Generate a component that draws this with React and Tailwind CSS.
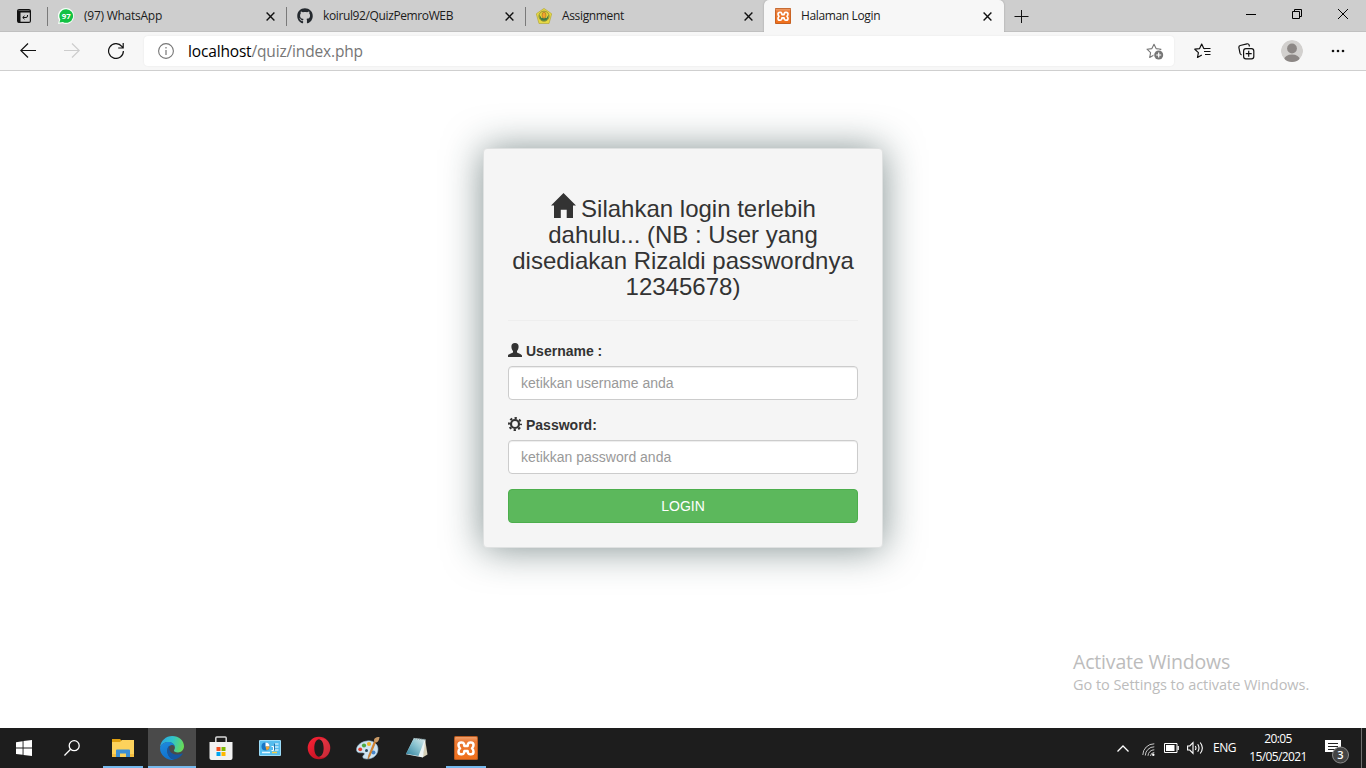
import React from "react";
import { FaGithub } from "react-icons/fa";

const UI = "font-['Open_Sans','Noto_Sans',sans-serif]";

function XamppIcon({ className }) {
  return (
    <svg viewBox="0 0 24 24" className={className}>
      <defs>
        <linearGradient id="xampp-face" x1="0" y1="0" x2="0" y2="1">
          <stop offset="0" stopColor="#f0a06c" />
          <stop offset=".2" stopColor="#ea7a35" />
          <stop offset="1" stopColor="#f0701c" />
        </linearGradient>
      </defs>
      <rect width="24" height="24" rx="1.5" fill="#b85a20" />
      <rect x="1" y="1" width="22" height="22" rx="1" fill="url(#xampp-face)" />
      <path
        d="M10.400 9.900 L10 7.900 Q9.500 6.500 7.900 6.500 H7.100 Q4.500 6.500 4.500 9.100 Q4.500 11.100 6 12.400 Q4.500 13.700 4.500 15.700 Q4.500 18.300 7.100 18.300 H7.900 Q9.500 18.300 10 16.900 L10.400 14.900 H13.600 L14 16.900 Q14.500 18.300 16.100 18.300 H16.900 Q19.500 18.300 19.500 15.700 Q19.500 13.700 18 12.400 Q19.500 11.100 19.500 9.100 Q19.500 6.500 16.900 6.500 H16.100 Q14.500 6.500 14 7.900 L13.600 9.900 Z"
        fill="none"
        stroke="#fff"
        strokeWidth="2.500"
        strokeLinejoin="round"
      />
    </svg>
  );
}

function WhatsAppIcon() {
  return (
    <svg viewBox="0 0 16 16" className="size-4">
      <path d="M8 0a8 8 0 0 1 0 16 8 8 0 0 1-3.600-.8L0 16l1-4A8 8 0 0 1 8 0Z" fill="#f6fff8" />
      <path d="M8.200 1.200a6.800 6.800 0 1 1-3.300 12.700L1.500 14.600l.8-3.200A6.800 6.800 0 0 1 8.200 1.200Z" fill="#12c143" />
      <text x="8.200" y="10.700" textAnchor="middle" fontSize="7.800" fontWeight="700" fill="#fff" fontFamily="Open Sans, sans-serif">97</text>
    </svg>
  );
}

function CampusIcon() {
  return (
    <svg viewBox="0 0 16 16" className="size-4">
      <path d="M8 .4 15.700 5.800 13 15.500H3L.3 5.800Z" fill="#e6da45" stroke="#b5a83b" strokeWidth=".7" strokeLinejoin="round" />
      <circle cx="8" cy="8.200" r="5.100" fill="#e9d537" stroke="#8f8b35" strokeWidth=".9" />
      <path d="M3.500 6.800c-.3 4 1.700 6 4.500 6s4.800-2 4.500-6L10.500 10H5.500Z" fill="#3f7c45" />
      <ellipse cx="8" cy="7.200" rx="2" ry="3.100" fill="#f0a42f" stroke="#7d6526" strokeWidth=".5" />
    </svg>
  );
}

function CloseX() {
  return (
    <svg viewBox="0 0 9 9" className="size-[9px]" fill="none" stroke="#111" strokeWidth="1.400">
      <path d="M.6.6l7.800 7.800M8.400.6.6 8.400" />
    </svg>
  );
}

function Tab({ icon, title, tracking }) {
  return (
    <div className="flex h-8 w-[239px] items-center">
      <span className="h-[19px] w-px bg-[#7a7a7a]" />
      <span className="ml-[10px] flex size-4">{icon}</span>
      <span className={"ml-[10px] flex-1 whitespace-nowrap text-[12px] leading-4 text-[#1b1b1b] " + tracking}>{title}</span>
      <span className="mr-[11px]">
        <CloseX />
      </span>
    </div>
  );
}

function TitleBar() {
  return (
    <div className="flex h-8 bg-[#cecece] shadow-[inset_0_-1px_0_#c0c0c0]">
      <div className="flex w-[47px] items-center justify-center">
        <svg viewBox="0 0 14 14" className="size-[14px]" fill="none" stroke="#111">
          <rect x=".6" y=".6" width="12.800" height="12.800" rx="1.500" strokeWidth="1.200" />
          <path d="M.6 1.500h12.800v2H3.500v10H1Z" fill="#111" stroke="none" />
          <path d="M10.500 6v1q0 1.500-1.500 1.500H6M7.500 6.800 5.700 8.500l1.800 1.700" strokeWidth="1" />
        </svg>
      </div>
      <Tab icon={<WhatsAppIcon />} title="(97) WhatsApp" tracking="tracking-[-0.25px]" />
      <Tab icon={<FaGithub className="size-4 text-[#24292e]" />} title="koirul92/QuizPemroWEB" tracking="tracking-[-0.38px]" />
      <Tab icon={<CampusIcon />} title="Assignment" tracking="tracking-[-0.35px]" />
      <div className="flex w-[240px] items-center rounded-t-[5px] bg-[#f7f7f7] shadow-[0_0_2px_rgba(0,0,0,0.25)]">
        <span className="ml-[11px] flex size-4">
          <XamppIcon className="size-4" />
        </span>
        <span className="ml-[10px] flex-1 whitespace-nowrap text-[12px] leading-4 tracking-[-0.36px] text-[#1b1b1b]">Halaman Login</span>
        <span className="mr-[12px]">
          <CloseX />
        </span>
      </div>
      <div className="flex w-[35px] items-center justify-center">
        <svg viewBox="0 0 15 15" className="size-[15px]" stroke="#111" strokeWidth="1">
          <path d="M7.500 1v13M.5 7.500h14" />
        </svg>
      </div>
      <div className="ml-auto flex h-7 items-center">
        <span className="flex w-[46px] justify-center">
          <svg viewBox="0 0 10 10" className="size-[10px]" stroke="#000"><path d="M0 5.500h10" /></svg>
        </span>
        <span className="flex w-[46px] justify-center">
          <svg viewBox="0 0 10 10" className="size-[10px]" fill="none" stroke="#000">
            <path d="M.5 2.500h7v7h-7ZM2.500 2.500v-2h7v7h-2" />
          </svg>
        </span>
        <span className="flex w-[46px] justify-center">
          <svg viewBox="0 0 10 10" className="size-[10px]" fill="none" stroke="#000"><path d="M0 0l10 10M10 0 0 10" /></svg>
        </span>
      </div>
    </div>
  );
}

const STAR = "M8 1.200l2.100 4.400 4.900.6-3.600 3.400.9 4.900L8 12.100l-4.300 2.400.9-4.900L1 6.200l4.900-.6Z";

function Toolbar() {
  return (
    <div className="flex h-[39px] items-center border-b border-[#cfcfcf] bg-[#f7f7f7]">
      <div className="flex w-[144px] pl-[6px]">
        <span className="flex w-11 justify-center">
          <svg viewBox="0 0 16 16" className="size-4" fill="none" stroke="#111" strokeWidth="1.200"><path d="M16 7.500H.8M8 .5l-7.200 7 7.200 7" /></svg>
        </span>
        <span className="flex w-11 justify-center">
          <svg viewBox="0 0 16 16" className="size-4" fill="none" stroke="#cdcdcd" strokeWidth="1.200"><path d="M0 7.500h15.200M8 .5l7.200 7-7.200 7" /></svg>
        </span>
        <span className="flex w-11 justify-center">
          <svg viewBox="0 0 16 16" className="size-4" fill="none" stroke="#111" strokeWidth="1.200">
            <path d="M15.400 8A7.400 7.400 0 1 1 13.800 3.400L15 5M15.200 0v5h-5" />
          </svg>
        </span>
      </div>
      <div className="flex h-[30px] w-[1030px] items-center rounded bg-white pl-[14px] pr-[10px] shadow-[0_0_2px_rgba(0,0,0,0.08)]">
        <svg viewBox="0 0 16 16" className="size-4" fill="none" stroke="#767676">
          <circle cx="8" cy="8" r="7.400" strokeWidth="1.100" />
          <path d="M8 7v5M8 4v1.500" strokeWidth="1.200" />
        </svg>
        <span className="ml-[14px] flex-1 text-[15.500px] leading-5 tracking-[-0.16px] text-[#767676]">
          <span className="text-black">localhost</span>/quiz/index.php
        </span>
        <svg viewBox="0 0 18 17" className="h-[17px] w-[18px]" fill="none">
          <path d={STAR} stroke="#767676" strokeWidth="1.100" strokeLinejoin="round" />
          <circle cx="12.700" cy="12" r="5.300" fill="#fff" />
          <circle cx="12.700" cy="12" r="4.500" fill="#767676" />
          <path d="M12.700 9.500v5M10.200 12h5" stroke="#fff" strokeWidth="1.200" />
        </svg>
      </div>
      <div className="flex flex-1 items-center pl-[20px]">
        <svg viewBox="0 0 17 16" className="h-4 w-[17px]" fill="none" stroke="#111" strokeWidth="1.200" strokeLinejoin="round">
          <path d="M11.300 5.700 9.800 5.400 7.700 1 5.600 5.600.8 6.200l3.600 3.400-.9 4.900 4.300-2.400" />
          <path d="M10.500 5.500h6M10 8.500h6.500M11 11.500h5.500" strokeWidth="1.100" />
        </svg>
        <svg viewBox="0 0 17 17" className="ml-[27px] size-[17px]" fill="none" stroke="#111" strokeWidth="1.200">
          <path d="M3.600 11.800Q2.300 11.500 2 10.200L.9 4.700Q.6 3 2.200 2.500L9 .8q1.700-.3 2.100 1.200l.4 1.500" />
          <rect x="5.600" y="5.600" width="10.200" height="10.200" rx="2.300" />
          <path d="M10.700 7.700v6M7.700 10.700h6" />
        </svg>
        <svg viewBox="0 0 22 22" className="ml-[26px] size-[22px]">
          <defs><clipPath id="avatar-clip"><circle cx="11" cy="11" r="11" /></clipPath></defs>
          <g clipPath="url(#avatar-clip)">
            <circle cx="11" cy="11" r="11" fill="#d2d0ce" />
            <circle cx="11" cy="8.500" r="4.900" fill="#8c8785" />
            <ellipse cx="11" cy="19.500" rx="7.800" ry="5" fill="#8c8785" />
          </g>
        </svg>
        <svg viewBox="0 0 14 4" className="ml-[28px] h-1 w-[14px]" fill="#111">
          <circle cx="2" cy="2" r="1.300" /><circle cx="7" cy="2" r="1.300" /><circle cx="12" cy="2" r="1.300" />
        </svg>
      </div>
    </div>
  );
}

function LoginCard() {
  return (
    <form className="flex h-[400px] w-[400px] flex-col rounded border border-[#dfe1e1] bg-[#f5f5f5] px-[24px] pt-[47px] font-['Liberation_Sans',Arial,sans-serif] text-sm leading-5 text-[#333] shadow-[0_1px_38px_rgba(28,55,55,0.56)]">
      <h3 className="h-[104px] whitespace-nowrap text-center text-[24px] leading-[26px]">
        <svg viewBox="0 0 25 25" className="relative -top-[2px] mr-[5px] ml-px inline-block size-[25px] align-baseline -mb-[3px] -mt-[8px]" fill="#333">
          <path d="M12.500 0 25 12.500h-3V25h-6.300v-8.300H9.800V25H3V12.500H0Z" />
        </svg>
        Silahkan login terlebih
        <br />
        dahulu... (NB : User yang
        <br />
        disediakan Rizaldi passwordnya
        <br />
        12345678)
      </h3>
      <hr className="mt-5 mb-5 border-t border-[#eee]" />
      <label className="flex h-5 items-center font-bold">
        <svg viewBox="0 0 14 14" className="mr-1 size-[14px] -mt-[2px]" fill="#333">
          <path d="M7 0C9.500 0 10.600 1.500 10.600 3.500 10.600 5.500 9.800 7 9 8v1.400c1 .8 5 1.600 5 3.200V14H0v-1.400c0-1.600 4-2.400 5-3.200V8C4.200 7 3.400 5.500 3.400 3.500 3.400 1.500 4.500 0 7 0Z" />
        </svg>
        Username :
      </label>
      <input className="mt-[5px] h-[34px] rounded border border-[#ccc] bg-white px-3 shadow-[inset_0_1px_1px_rgba(0,0,0,0.075)] placeholder:text-[#999]" placeholder="ketikkan username anda" />
      <label className="mt-[15px] flex h-5 items-center font-bold">
        <svg viewBox="0 0 14 14" className="mr-1 size-[14px] -mt-[2px]" fill="none" stroke="#333">
          <circle cx="7" cy="7" r="4" strokeWidth="2.200" />
          <circle cx="7" cy="7" r="6" strokeWidth="2" strokeDasharray="2.350 2.362" strokeDashoffset="1.175" />
        </svg>
        Password:
      </label>
      <input type="password" className="mt-[5px] h-[34px] rounded border border-[#ccc] bg-white px-3 shadow-[inset_0_1px_1px_rgba(0,0,0,0.075)] placeholder:text-[#999]" placeholder="ketikkan password anda" />
      <button type="button" className="mt-[15px] h-[34px] rounded border border-[#4cae4c] bg-[#5cb85c] text-white">LOGIN</button>
    </form>
  );
}

function ExplorerIcon() {
  return (
    <svg viewBox="0 0 22 18" className="-mt-[1px] h-[18px] w-[22px]">
      <path d="M0 0h8l2 2h12v16H0Z" fill="#e0a010" />
      <path d="M0 3h8l2-2h12v17H0Z" fill="#fdd25c" />
      <path d="M4 18v-6.500Q4 10.500 5 10.500h12q1 0 1 1V18h-4v-3.500H8V18Z" fill="#3d8fd4" />
      <path d="M0 15h4v3H0ZM18 15h4v3h-4Z" fill="#f4bd3f" />
    </svg>
  );
}

function EdgeIcon() {
  return (
    <svg viewBox="0 0 24 24" className="size-6">
      <defs>
        <linearGradient id="edge-top" x1="0" y1=".3" x2="1" y2=".5">
          <stop offset="0" stopColor="#2aa6e4" />
          <stop offset=".5" stopColor="#31c4c9" />
          <stop offset="1" stopColor="#69dc55" />
        </linearGradient>
        <linearGradient id="edge-left" x1="0" y1="0" x2=".4" y2="1">
          <stop offset="0" stopColor="#1f8bdc" />
          <stop offset="1" stopColor="#0f72cf" />
        </linearGradient>
      </defs>
      <path d="M0 11.500C.6 4.500 6 0 12.200 0 19 0 24 4.700 24 10.200c0 3.700-2.800 6.200-6 6.200-3 0-4.100-1.100-4.100-1.900 0-.7 1-1.100 1-3C14.900 8.500 12 6 8.500 6 4 6 1 8.800 0 11.500Z" fill="url(#edge-top)" />
      <path d="M0 12C.7 8.500 4 6 8.400 6c3.300 0 6 1.800 6.500 4.500-.9-1-2-1.400-3.400-1.400-2.700.4-4.200 2.800-4.200 5.700 0 5 3.400 8.300 6.800 8.900A12 12 0 0 1 0 12Z" fill="url(#edge-left)" />
      <path d="M9.300 9.700c-1.300 1-2 2.800-2 5 0 5.200 4.300 9.200 7 8.900 3.600-.6 6.500-2.600 8.300-5.500.4-.7-.2-.9-.7-.7-5.900 2.700-13.800.6-12.600-7.700Z" fill="#1556a2" />
    </svg>
  );
}

function StoreIcon() {
  return (
    <svg viewBox="0 0 24 24" className="size-6">
      <path d="M6.800 7V2q0-1 1-1h8.400q1 0 1 1v5" fill="none" stroke="#d8d8d8" strokeWidth="1.500" />
      <path d="M.5 6h23v16q0 2-2 2h-19q-2 0-2-2Z" fill="#f2f2f2" />
      <path d="M7.500 11h4v4h-4Z" fill="#f25022" /><path d="M12.500 11h4v4h-4Z" fill="#7fba00" />
      <path d="M7.500 16h4v4h-4Z" fill="#00a4ef" /><path d="M12.500 16h4v4h-4Z" fill="#ffb900" />
    </svg>
  );
}

function ControlPanelIcon() {
  return (
    <svg viewBox="0 0 22 16" className="-mt-px h-4 w-[22px]">
      <rect width="22" height="16" rx="1" fill="#9bdcf8" />
      <rect x="1" y="1" width="20" height="14" fill="#55bdee" />
      <circle cx="6.500" cy="6.500" r="4" fill="#1976c4" />
      <path d="M6.500 6.500v-4a4 4 0 0 1 4 4Z" fill="#fff" />
      <path d="M6.500 6.500h4a4 4 0 0 1-3 3.800Z" fill="#f5a52d" />
      <path d="M12.500 6.500h2v4h-2M15.500 4h4M15.500 7h4M15.500 10h4" stroke="#fff" fill="none" />
      <path d="M15.500 3.500v7" stroke="#2572a8" />
      <path d="M3 12.500h8" stroke="#e7f8ff" strokeWidth="1.500" /><path d="M13 12.500h5" stroke="#f7cd48" strokeWidth="1.500" />
    </svg>
  );
}

function OperaIcon() {
  return (
    <svg viewBox="0 0 24 24" className="size-6">
      <defs>
        <linearGradient id="opera-ring" x1="0" y1="0" x2="1" y2="1">
          <stop offset="0" stopColor="#ff2538" /><stop offset="1" stopColor="#ad0c1c" />
        </linearGradient>
      </defs>
      <path fillRule="evenodd" fill="url(#opera-ring)" d="M12 .7a11.300 11.300 0 1 1 0 22.600A11.300 11.300 0 0 1 12 .7Zm0 2.600C9.300 3.300 7.300 7 7.300 12s2 8.700 4.700 8.700 4.700-3.700 4.700-8.700S14.700 3.300 12 3.300Z" />
      <path d="M12 3.300c3-1.800 7-.7 9 2.300 2.900 3.800 2.900 9 0 12.800-2 3-6 4.100-9 2.300 2.700 0 4.700-3.700 4.700-8.700S14.700 3.300 12 3.300Z" fill="#ff7a80" opacity=".25" />
    </svg>
  );
}

function PaintIcon() {
  return (
    <svg viewBox="0 0 24 24" className="size-6">
      <path d="M11 5C17 4 22 8 22 13c0 6-5 10-11 10-4 0-5.500-2-3-4.200 1.500-1.600-.3-2.300-3-2C1.500 17 0 15.300.6 12.500 1.500 8.500 6 5.600 11 5Z" fill="#cfe4f1" stroke="#8db5cc" strokeWidth=".6" />
      <circle cx="4.200" cy="13.300" r="1.900" fill="#e0402f" /><circle cx="8" cy="9.500" r="2.100" fill="#4ca942" />
      <circle cx="13" cy="8" r="2.100" fill="#f0b429" /><circle cx="10.500" cy="14.500" r="1.500" fill="#27495b" />
      <circle cx="17.500" cy="16.500" r="2" fill="#4787cb" />
      <path d="M20 5.500 14 20l-2 3 .6-3.500L18.500 5Z" fill="#e48b28" stroke="#a75d18" strokeWidth=".5" />
      <path d="M18.200 5.500c-.7-3 1-4.500 5.300-4.500-.3 3-1.200 4.500-3.200 5.500Z" fill="#c99a66" />
    </svg>
  );
}

function NotepadIcon() {
  return (
    <svg viewBox="0 0 24 24" className="size-6">
      <defs>
        <linearGradient id="notepad-cover" x1="0" y1="1" x2="1" y2="0">
          <stop offset="0" stopColor="#2c7f9c" /><stop offset=".6" stopColor="#8fc6d2" /><stop offset="1" stopColor="#d6e8e9" />
        </linearGradient>
      </defs>
      <path d="M20 3 22.500 18.500 17.500 21.500Z" fill="#d6cfb7" />
      <path d="M9 2 20.500 3.500 18 21.500 1 18.300Z" fill="#edf4f4" />
      <path d="M8.500 3 19.500 4.200 13.500 20 1 17.700Z" fill="url(#notepad-cover)" />
      <path d="M8.500 2.500 20.500 3.600" stroke="#6e8e96" strokeWidth="1.300" strokeDasharray="1 .8" />
    </svg>
  );
}

function TaskButton({ children, width = "w-[49px]", active = false, bar = "" }) {
  return (
    <div className={"flex h-10 flex-col items-center " + width + (active ? " bg-[#4a4a4a]" : "")}>
      <div className="flex h-[38px] items-center pt-[2px]">{children}</div>
      <div className={"h-[2px] " + bar} />
    </div>
  );
}

function Taskbar() {
  return (
    <div className="flex h-10 bg-[#1d1d1d] text-white">
      <TaskButton width="w-12">
        <svg viewBox="0 0 16 16" className="size-4" fill="#fff">
          <path d="M0 2.200 6.600 1.300v6.300H0ZM7.500 1.100 16 0v7.600H7.500ZM0 8.500h6.600v6.300L0 13.900ZM7.500 8.500H16V16l-8.500-1.100Z" />
        </svg>
      </TaskButton>
      <TaskButton width="w-[50px] pr-[2px]">
        <svg viewBox="0 0 16 16" className="size-4" fill="none" stroke="#fff" strokeWidth="1.300">
          <circle cx="10.200" cy="5.700" r="5" /><path d="M6.600 9.300.4 15.500" />
        </svg>
      </TaskButton>
      <TaskButton width="w-[50px]" bar="w-10 bg-[#76b9ed]"><ExplorerIcon /></TaskButton>
      <TaskButton width="w-12" active bar="w-12 bg-[#76b9ed]"><EdgeIcon /></TaskButton>
      <TaskButton><StoreIcon /></TaskButton>
      <TaskButton><ControlPanelIcon /></TaskButton>
      <TaskButton><OperaIcon /></TaskButton>
      <TaskButton><PaintIcon /></TaskButton>
      <TaskButton><NotepadIcon /></TaskButton>
      <TaskButton width="w-[50px]" bar="w-10 bg-[#76b9ed]"><XamppIcon className="size-6" /></TaskButton>
      <div className="ml-auto flex items-center">
        <svg viewBox="0 0 12 7" className="mr-[13px] h-[7px] w-3" fill="none" stroke="#fff" strokeWidth="1.300"><path d="M.5 6.500 6 1l5.500 5.500" /></svg>
        <svg viewBox="0 0 13 13" className="mr-[9px] mt-[2px] size-[13px]" fill="none" stroke="#c8c8c8" strokeWidth="1">
          <path d="M.8 12A11.300 11.300 0 0 1 12.300.8M3.300 12.500a9 9 0 0 1 9-8.700M6 12.800a6.200 6.200 0 0 1 6.300-6" />
          <path d="M8.500 13q0-3 3.800-3.600" /><circle cx="11.300" cy="11.700" r="1.200" fill="#fff" stroke="none" />
        </svg>
        <svg viewBox="0 0 15 10" className="mr-[8px] h-[10px] w-[15px]" fill="none" stroke="#fff">
          <path d="M.5.5h12.500v9H.5Z" /><path d="M2 2h8.500v6H2Z" fill="#fff" stroke="none" /><path d="M14.200 3v4" strokeWidth="1.300" />
        </svg>
        <svg viewBox="0 0 17 14" className="mr-[9px] h-[14px] w-[17px]" fill="none" stroke="#fff" strokeWidth="1.100">
          <path d="M.6 5h2.200L6 1.700v10.600L2.800 9H.6Z" /><path d="M8.300 5q1.300 2 0 4M10.700 3.300q2.600 3.700 0 7.400M13.200 1.500q4.300 5.500 0 11" />
        </svg>
        <span className="w-[24px] whitespace-nowrap text-[12px] leading-4 tracking-[-0.5px]">ENG</span>
        <span className="ml-[4px] flex w-[74px] flex-col items-center whitespace-nowrap text-[12px] leading-[18px] tracking-[-0.6px]">
          <span>20:05</span>
          <span>15/05/2021</span>
        </span>
        <svg viewBox="0 0 26 26" className="ml-[10px] mt-[5px] size-[26px]">
          <path d="M0 2h16v12h-4v3l-4-3H0Z" fill="#fff" />
          <path d="M3 5.500h10M3 8.500h10M3 11.500h7" stroke="#222" />
          <circle cx="15.500" cy="17" r="8" fill="#444" stroke="#8a8a8a" />
          <text x="15.500" y="21" textAnchor="middle" fontSize="11" fontWeight="600" fill="#fff" fontFamily="Open Sans, sans-serif">3</text>
        </svg>
        <span className="ml-[10px] mr-[4px] h-10 w-px bg-[#6f6f6f]" />
      </div>
    </div>
  );
}

export default function App() {
  return (
    <div className={"flex h-[768px] w-[1366px] flex-col overflow-hidden bg-white " + UI}>
      <TitleBar />
      <Toolbar />
      <main className="relative flex flex-1 justify-center pt-[77px]">
        <LoginCard />
        <div className="absolute top-[577px] left-[1073px] whitespace-nowrap text-[#bcbcbc]">
          <div className="text-[19.500px] leading-7 tracking-[-0.18px]">Activate Windows</div>
          <div className="text-[14.500px] leading-[18px] tracking-[-0.04px]">Go to Settings to activate Windows.</div>
        </div>
      </main>
      <Taskbar />
    </div>
  );
}
